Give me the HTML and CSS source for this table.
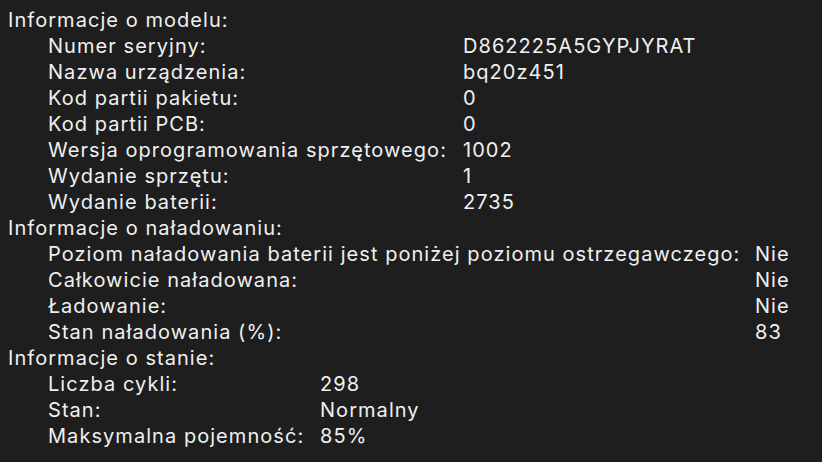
FILE: index.html
```html
<!DOCTYPE html>
<html lang="pl">
<head>
<meta charset="utf-8">
<link rel="stylesheet" href="styles.css">
</head>
<body>
<div class="panel">
  <div class="heading">Informacje o modelu:</div>
  <div class="grid grid-model">
    <div>Numer seryjny:</div><div>D862225A5GYPJYRAT</div>
    <div>Nazwa urządzenia:</div><div>bq20z451</div>
    <div>Kod partii pakietu:</div><div>0</div>
    <div>Kod partii PCB:</div><div>0</div>
    <div>Wersja oprogramowania sprzętowego:</div><div>1002</div>
    <div>Wydanie sprzętu:</div><div>1</div>
    <div>Wydanie baterii:</div><div>2735</div>
  </div>
  <div class="heading">Informacje o naładowaniu:</div>
  <div class="grid grid-charge">
    <div>Poziom naładowania baterii jest poniżej poziomu ostrzegawczego:</div><div>Nie</div>
    <div>Całkowicie naładowana:</div><div>Nie</div>
    <div>Ładowanie:</div><div>Nie</div>
    <div>Stan naładowania (%):</div><div>83</div>
  </div>
  <div class="heading">Informacje o stanie:</div>
  <div class="grid grid-health">
    <div>Liczba cykli:</div><div>298</div>
    <div>Stan:</div><div>Normalny</div>
    <div>Maksymalna pojemność:</div><div>85%</div>
  </div>
</div>
</body>
</html>
```
FILE: styles.css
```css
html, body {
  margin: 0;
  background: #1e1e1e;
}
.panel {
  padding: 7px 0 0 8px;
  font-family: Inter, "Noto Sans", sans-serif;
  font-size: 20px;
  line-height: 26px;
  letter-spacing: 1.05px;
  color: #f0f0f0;
  white-space: nowrap;
}
.grid {
  display: grid;
  padding-left: 40px;
}
.grid-model { grid-template-columns: 415px auto; }
.grid-charge { grid-template-columns: 707px auto; }
.grid-health { grid-template-columns: 272px auto; }
```
